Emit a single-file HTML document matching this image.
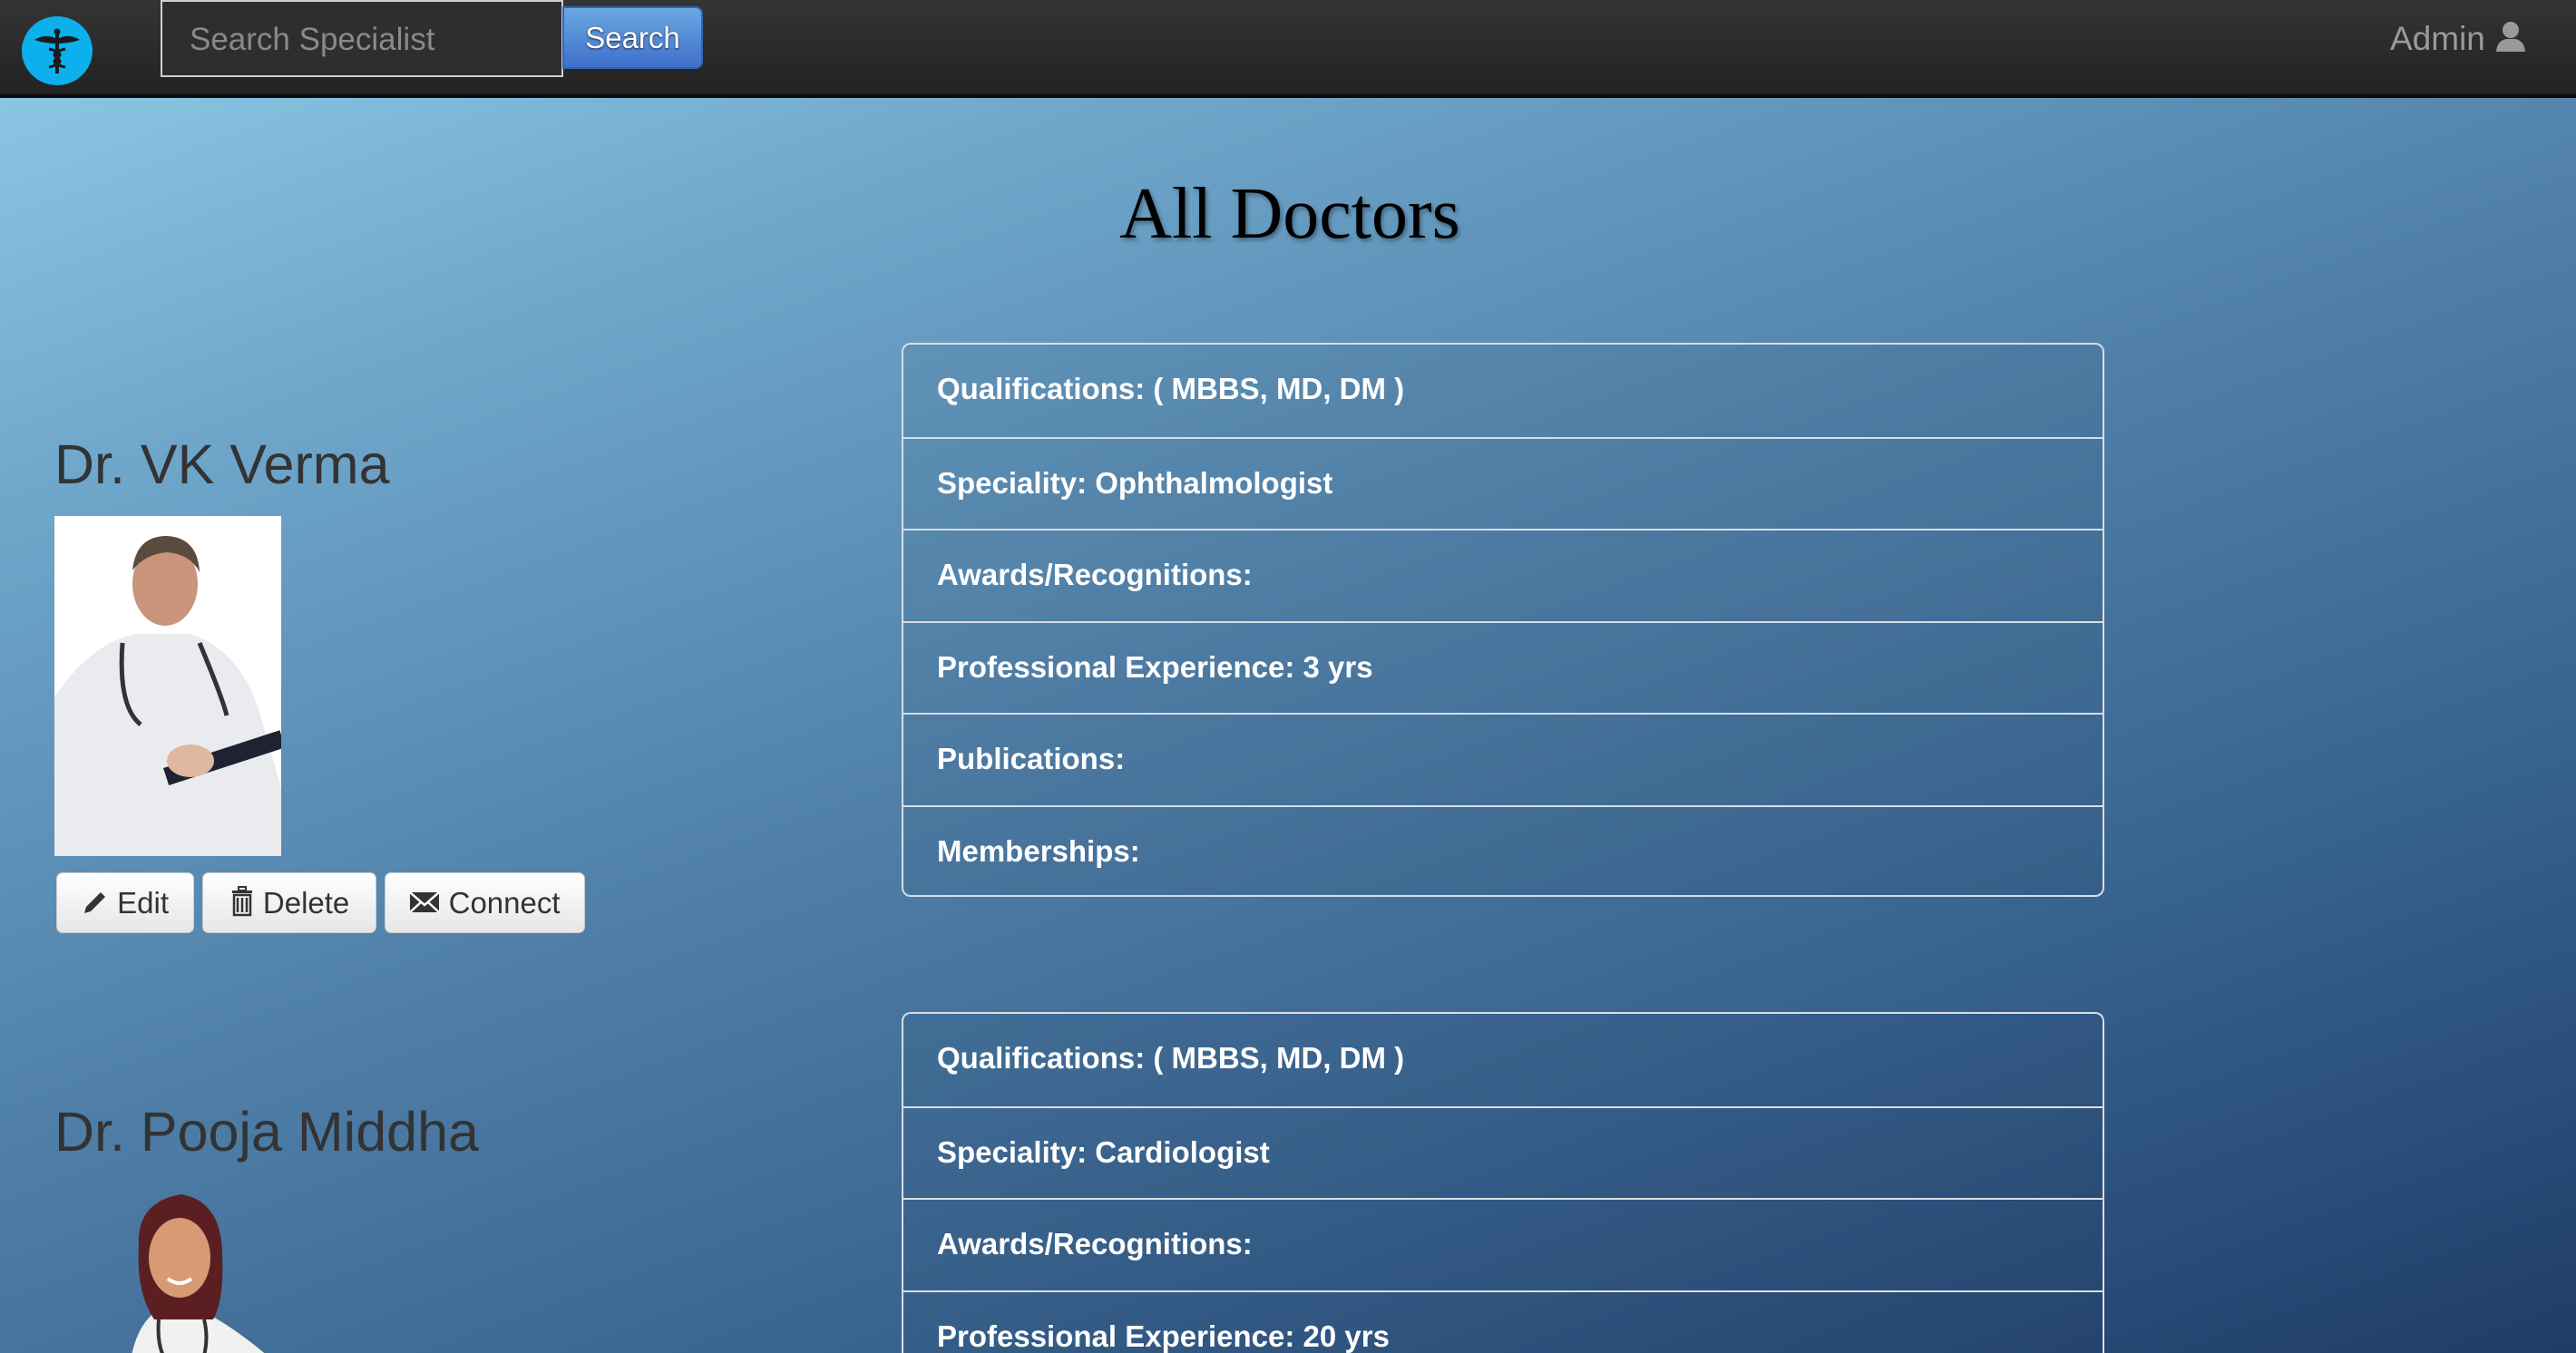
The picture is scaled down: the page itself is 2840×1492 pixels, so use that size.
<!DOCTYPE html>
<html style="margin:0;padding:0;width:2840px;height:1492px;overflow:hidden;"><head><meta charset="utf-8">
<style>
body{margin:0;padding:0;width:2840px;height:1492px;overflow:hidden;position:relative;font-family:"Liberation Sans",sans-serif;}
.bg{position:absolute;left:0;top:0;width:2840px;height:1492px;background:linear-gradient(160deg,#90cde9 0%,#6fa7cb 22%,#4f7fa8 50%,#36608c 75%,#1f3c68 100%);}
.nav{position:absolute;left:0;top:0;width:2840px;height:104px;background:linear-gradient(#343434,#222);border-bottom:4px solid #0a0a0a;}
.logo{position:absolute;left:24px;top:18px;width:78px;height:76px;border-radius:50%;background:#0bb0ec;}
.search{position:absolute;left:177px;top:0;width:444px;height:85px;border:2px solid #cfcfcf;background:#2e2e2e;box-sizing:border-box;color:#8a8a8a;font-size:35px;line-height:83px;padding-left:30px;}
.sbtn{position:absolute;left:620px;top:7px;width:155px;height:69px;border-radius:0 8px 8px 0;background:linear-gradient(#6aa8e0,#3f70cc);border:2px solid #3762b5;box-sizing:border-box;color:#fff;font-size:33px;line-height:65px;text-align:center;text-shadow:0 1px 2px #223;}
.admin{position:absolute;left:2635px;top:18px;color:#9a9a9a;font-size:37px;line-height:50px;}
h1{position:absolute;left:0;width:2844px;top:186px;margin:0;text-align:center;font-family:"Liberation Serif",serif;font-weight:normal;font-size:80px;color:#000;text-shadow:2px 3px 4px rgba(0,0,0,.35);line-height:100px;}
.name{position:absolute;left:60px;font-size:61px;color:#333;line-height:70px;}
.photo{position:absolute;left:60px;width:250px;background:#fff;overflow:hidden;}
.btn{position:absolute;top:962px;height:67px;background:linear-gradient(#fff,#e6e6e6);border-radius:7px;border:1px solid #ccc;box-sizing:border-box;font-size:33px;color:#333;line-height:65px;text-align:center;}
.list{position:absolute;left:994px;width:1326px;border:2px solid #d8dde3;border-radius:10px;box-sizing:border-box;overflow:hidden;background:rgba(20,40,70,.08);}
.row{height:101.5px;border-top:2px solid #d8dde3;box-sizing:border-box;color:#fff;font-weight:bold;font-size:33px;line-height:98px;padding-left:37px;}
.row:first-child{border-top:none;}
</style></head><body>
<div class="bg"></div>
<div class="nav">
  <div class="logo">
    <svg width="78" height="76" viewBox="0 0 78 76">
      <g fill="#1a1a1a" stroke="#1a1a1a">
        <path d="M14 26 Q26 18 39 25 Q52 18 64 26 Q52 30 39 30 Q26 30 14 26Z" stroke="none"/>
        <circle cx="39" cy="17" r="3.5" stroke="none"/>
        <rect x="37" y="19" width="4" height="44" stroke="none"/>
        <path d="M30 36 Q48 40 39 46 Q30 52 48 56 M48 36 Q30 40 39 46 Q48 52 30 56" fill="none" stroke-width="3"/>
      </g>
    </svg>
  </div>
  <div class="search">Search Specialist</div>
  <div class="sbtn">Search</div>
  <div class="admin">Admin <svg width="36" height="36" viewBox="0 0 36 36" style="vertical-align:-3px"><circle cx="18" cy="11" r="9" fill="#9a9a9a"/><path d="M2 35 Q3 23 13 21 L23 21 Q33 23 34 35Z" fill="#9a9a9a"/></svg></div>
</div>

<h1>All Doctors</h1>

<div class="name" style="top:477px">Dr. VK Verma</div>
<div class="photo" style="top:569px;height:375px">
  <svg width="250" height="375" viewBox="0 0 250 375">
    <rect width="250" height="375" fill="#fff"/>
    <path d="M0 200 Q40 140 90 130 L150 130 Q210 150 230 230 L250 300 L250 375 L0 375Z" fill="#e9ebef"/>
    <ellipse cx="122" cy="75" rx="36" ry="46" fill="#c9957a"/>
    <path d="M86 60 Q90 22 124 22 Q158 24 160 62 Q150 42 124 40 Q100 42 86 60Z" fill="#5a4b3e"/>
    <path d="M75 140 Q70 210 95 230 M160 140 Q185 200 190 220" stroke="#333" stroke-width="5" fill="none"/>
    <rect x="120" y="278" width="135" height="20" transform="rotate(-18 120 278)" fill="#1f2230"/>
    <ellipse cx="150" cy="270" rx="26" ry="18" fill="#e0b7a0"/>
  </svg>
</div>
<div class="btn" style="left:62px;width:152px"><svg width="30" height="30" viewBox="0 0 30 30" style="vertical-align:-3px"><path d="M3 27 L5 20 L21 4 L26 9 L10 25Z" fill="#333"/></svg> Edit</div>
<div class="btn" style="left:223px;width:192px"><svg width="28" height="34" viewBox="0 0 28 34" style="vertical-align:-4px"><rect x="3" y="5" width="22" height="3" fill="#333"/><rect x="10" y="1" width="8" height="4" fill="none" stroke="#333" stroke-width="2"/><path d="M5 10 H23 V32 H5Z M9 13 V29 M14 13 V29 M19 13 V29" fill="none" stroke="#333" stroke-width="2.5"/></svg> Delete</div>
<div class="btn" style="left:424px;width:221px"><svg width="34" height="28" viewBox="0 0 34 28" style="vertical-align:-2px"><rect x="1" y="3" width="32" height="22" fill="#333"/><path d="M1 3 L17 17 L33 3 M1 25 L13 14 M33 25 L21 14" stroke="#fff" stroke-width="2.5" fill="none"/></svg> Connect</div>

<div class="list" style="top:378px;height:611px">
  <div class="row">Qualifications: ( MBBS, MD, DM )</div>
  <div class="row">Speciality: Ophthalmologist</div>
  <div class="row">Awards/Recognitions:</div>
  <div class="row">Professional Experience: 3 yrs</div>
  <div class="row">Publications:</div>
  <div class="row">Memberships:</div>
</div>

<div class="name" style="top:1213px">Dr. Pooja Middha</div>
<svg style="position:absolute;left:95px;top:1305px" width="210" height="187" viewBox="0 0 210 187">
  <path d="M50 190 Q60 140 100 130 Q140 140 200 190Z" fill="#f1f1f1"/>
  <path d="M58 70 Q55 20 105 12 Q150 20 150 80 Q152 130 140 150 L75 150 Q55 120 58 70Z" fill="#5b1f22"/>
  <ellipse cx="103" cy="82" rx="34" ry="44" fill="#d79a74"/>
  <path d="M90 105 Q103 115 116 105" stroke="#fff" stroke-width="4" fill="none"/>
  <path d="M80 150 Q78 175 85 190 M130 150 Q135 170 130 190" stroke="#333" stroke-width="4" fill="none"/>
</svg>

<div class="list" style="top:1116px;height:376px;border-bottom:none;border-radius:10px 10px 0 0">
  <div class="row">Qualifications: ( MBBS, MD, DM )</div>
  <div class="row">Speciality: Cardiologist</div>
  <div class="row">Awards/Recognitions:</div>
  <div class="row">Professional Experience: 20 yrs</div>
</div>
</body></html>
